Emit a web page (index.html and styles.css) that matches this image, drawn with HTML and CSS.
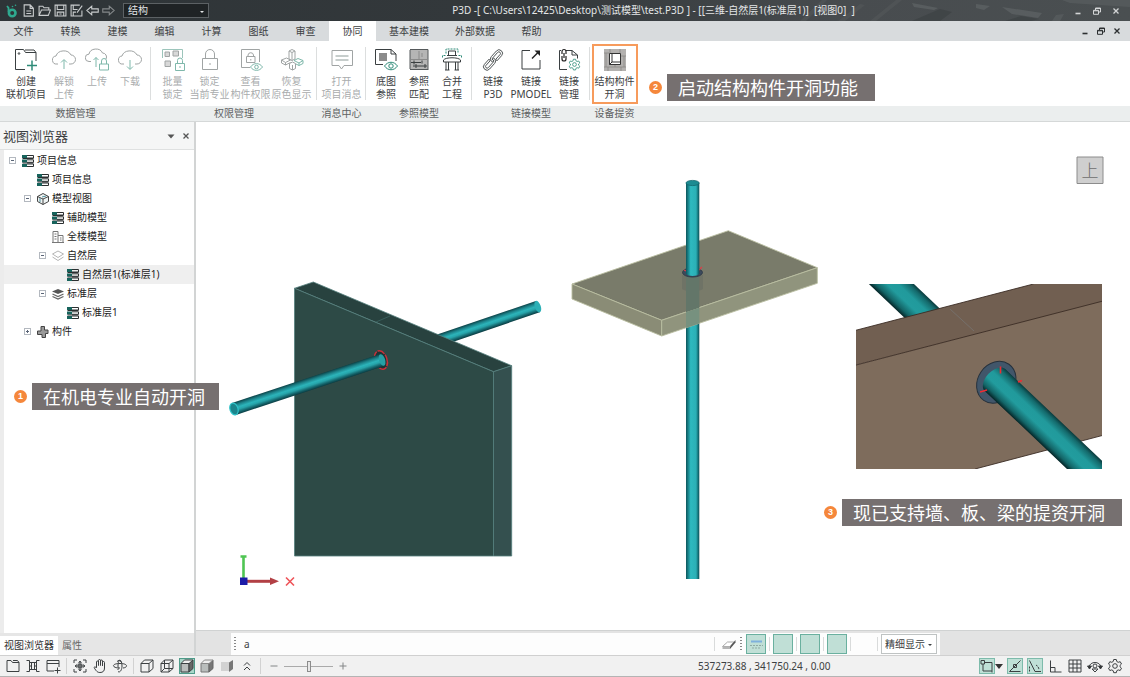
FILE: index.html
```html
<!DOCTYPE html>
<html lang="zh-CN">
<head>
<meta charset="utf-8">
<title>P3D</title>
<link rel="stylesheet" href="styles.css">
</head>
<body>
<svg class="defs" aria-hidden="true">
  <defs>
    <linearGradient id="pipe" x1="0" y1="0" x2="0" y2="1">
      <stop offset="0" stop-color="#0c4348"/><stop offset=".22" stop-color="#1c8289"/><stop offset=".45" stop-color="#2cb4ba"/><stop offset=".62" stop-color="#27a4aa"/><stop offset=".85" stop-color="#136168"/><stop offset="1" stop-color="#0a3c42"/>
    </linearGradient>
    <linearGradient id="pipe-v" x1="0" y1="0" x2="1" y2="0">
      <stop offset="0" stop-color="#0d555b"/><stop offset=".2" stop-color="#1c8d94"/><stop offset=".35" stop-color="#2eb9bf"/><stop offset=".75" stop-color="#2bb0b6"/><stop offset=".9" stop-color="#15757c"/><stop offset="1" stop-color="#0d4f55"/>
    </linearGradient>
    <linearGradient id="pipe-d" x1="0" y1="0" x2="0" y2="1">
      <stop offset="0" stop-color="#0a3b3d"/><stop offset=".12" stop-color="#146a6c"/><stop offset=".35" stop-color="#219a9c"/><stop offset=".6" stop-color="#229c9e"/><stop offset=".85" stop-color="#136567"/><stop offset="1" stop-color="#042426"/>
    </linearGradient>
    <clipPath id="beam-clip"><rect x="856" y="284" width="246" height="185"/></clipPath>
  </defs>
  <symbol id="i-cloud" viewBox="0 0 24 24"><path d="M6 16H5a4 4 0 0 1-1-8 8 7 0 0 1 15-1 4.500 4.500 0 0 1 0 9h-2"/></symbol>
  <symbol id="i-list" viewBox="0 0 12 12"><path d="M0 0h5v3H0zM0 4.500h5v3H0zM0 9h5v3H0z" fill="#17635c" stroke="none"/><path d="M5 .5h6.500v2.500H5M5 4.800h6.500v2.500H5M5 9h6.500v2.500H5M.5 3.500h11M.5 8h11" fill="none" stroke="#2b2f30"/></symbol>
  <symbol id="i-min" viewBox="0 0 10 10"><path d="M2.500 7.500h5" fill="none" stroke="currentColor" stroke-width="1.600"/></symbol>
  <symbol id="i-restore" viewBox="0 0 10 10"><path d="M3.500 4V2h5v4h-2M1.500 4.300h5v4h-5zM3.500 2.500h5M1.500 4.800h5" fill="none" stroke="currentColor"/></symbol>
  <symbol id="i-close" viewBox="0 0 10 10"><path d="M2.500 2.500l5 5M7.500 2.500l-5 5" fill="none" stroke="currentColor" stroke-width="1.300"/></symbol>
  <symbol id="i-cube" viewBox="0 0 16 16"><path d="M2 5.500h8v8.500H2zM2 5.500L5.500 2H14l-4 3.500M14 2v8.500L10 14"/></symbol>
  <symbol id="i-gear" viewBox="0 0 16 16"><path d="M6.700 1.500h2.600l.5 2 1.400.8 2-.6 1.300 2.300-1.500 1.400v1.400l1.500 1.400-1.300 2.300-2-.6-1.400.8-.5 2H6.700l-.5-2-1.400-.8-2 .6-1.300-2.300L3 8.800V7.400L1.500 6l1.300-2.300 2 .6 1.400-.8z"/><circle cx="8" cy="8" r="2.300"/></symbol>
</svg>

<div class="app">
  <header class="titlebar">
    <svg class="streaks" viewBox="0 0 330 21" preserveAspectRatio="xMaxYMid slice" aria-hidden="true">
      <path d="M0 21L22 0h5L6 21zM38 21L60 4l5 1-20 16zM70 21L96 0h6L76 21z" fill="#54585a"/>
      <path d="M112 3l26 5-4 2-20-3zM176 4l14 2-6 4-8-2zM202 7l40 6-4 5-26-4z" fill="#63686a"/>
      <path d="M262 0h68v7l-60-4zM256 15l8-1-4 7h-8z" fill="#5c6163"/>
      <path d="M112 21l28-12 12 3-12 9zM205 21l16-5 18 3-8 2z" fill="#3b4042"/>
    </svg>
    <div class="quick">
      <svg class="logo" viewBox="0 0 12 14" aria-hidden="true"><circle cx="6.200" cy="9" r="3.300" fill="none" stroke="#2fa98f" stroke-width="2.600"/><path d="M2.500 8V3.500M1 2l2 2.500" stroke="#2fa98f" stroke-width="1.800" fill="none"/><circle cx="6.500" cy="2.500" r=".8" fill="#2fa98f"/><circle cx="9.500" cy="1.200" r=".8" fill="#2fa98f"/></svg>
      <button aria-label="新建"><svg viewBox="0 0 12 12"><path d="M2 .8h5.500L10.500 4v7.200H2zM7.500 1v3h3M4 6.500h4.500M4 8.800h4.500"/></svg></button>
      <button aria-label="打开"><svg viewBox="0 0 12 12"><path d="M1 10.500V2h3.500l1 1.500H10v2M1 10.500h8.500l2-5H3.200z"/></svg></button>
      <button aria-label="保存"><svg viewBox="0 0 12 12"><path d="M1 1h10v10H1zM3 1v4h6V1M3 11V7.500h6V11M5 9.300h2"/></svg></button>
      <button aria-label="另存为"><svg viewBox="0 0 12 12"><path d="M11 6v5H1V1h8M3 1v4h4M3 11V7.500h2.500M11.300 1.500L6.500 8"/></svg></button>
      <button aria-label="撤销"><svg viewBox="0 0 12 12"><path d="M.8 6l4.500-4v2.500h6v3h-6V10z"/></svg></button>
      <button class="dim" aria-label="重做"><svg viewBox="0 0 12 12"><path d="M11.200 6l-4.500-4v2.500h-6v3h6V10z"/></svg></button>
    </div>
    <div class="pick pick-dark"><select aria-label="专业"><option>结构</option></select></div>
    <h1 class="title">P3D -[ C:\Users\12425\Desktop\测试模型\test.P3D ] - [[三维-自然层1(标准层1)]&nbsp; [视图0]&nbsp; ]</h1>
    <div class="wins">
      <button aria-label="最小化"><svg><use href="#i-min"/></svg></button>
      <button aria-label="还原"><svg><use href="#i-restore"/></svg></button>
      <button aria-label="关闭"><svg><use href="#i-close"/></svg></button>
    </div>
  </header>

  <nav class="menubar">
    <button>文件</button><button>转换</button><button>建模</button><button>编辑</button><button>计算</button><button>图纸</button><button>审查</button><button class="on">协同</button><button class="wide">基本建模</button><button class="wide">外部数据</button><button>帮助</button>
    <div class="wins wins-doc">
      <button aria-label="最小化视图"><svg><use href="#i-min"/></svg></button>
      <button aria-label="还原视图"><svg><use href="#i-restore"/></svg></button>
      <button aria-label="关闭视图"><svg><use href="#i-close"/></svg></button>
    </div>
  </nav>

  <section class="ribbon">
    <div class="group g-data">
      <div class="tools">
        <button class="w43"><svg viewBox="0 0 24 24"><path d="M11 21.500H1.500V1.500h8l2 3h10.500V13M11 2h9l2 2.500" stroke="#3a3f41"/><circle cx="5" cy="5.500" r=".8" stroke="#3a3f41"/><path d="M18 12.500v10M13 17.500h10" stroke="#2e8b78" stroke-width="1.500"/></svg><span>创建<br>联机项目</span></button>
        <button class="w33" disabled><svg viewBox="0 0 24 24"><use href="#i-cloud"/><path d="M12 21v-9M9 14.500l3-3 3 3" stroke="#7fb8ab"/></svg><span>解锁<br>上传</span></button>
        <button class="w33" disabled><svg viewBox="0 0 24 24"><path d="M6 13.500H4a3.700 3.700 0 0 1 0-7.400A7 6 0 0 1 17.500 5a4 4 0 0 1 3.500 6"/><path d="M11 19V9.500M8.500 12l2.500-2.500 2.500 2.500M14.500 16h9v6h-9zM16.500 16v-3a2.500 2.500 0 0 1 5 0v3" stroke="#7fb8ab"/></svg><span>上传</span></button>
        <button class="w33" disabled><svg viewBox="0 0 24 24"><use href="#i-cloud"/><path d="M12 12v9M9 18.500l3 3 3-3" stroke="#7fb8ab"/></svg><span>下载</span></button>
      </div>
      <div class="gname">数据管理</div>
    </div>
    <div class="group g-auth">
      <div class="tools">
        <button class="w33" disabled><svg viewBox="0 0 24 24"><path d="M1.500 10V1.500h20V10" stroke="#9cc5bb"/><path d="M4 4h4.500v4.500H4zM12 3h5.500v5H12zM4 13h5.500v5.500H4z" fill="#d8d8d8"/><path d="M14.500 15.500h9v7h-9zM16.500 15.500v-3a2.500 2.500 0 0 1 5 0v3M19 18v2" stroke="#7fb8ab"/></svg><span>批量<br>锁定</span></button>
        <button class="w41" disabled><svg viewBox="0 0 24 24"><path d="M4.500 10.500h15v11h-15zM7.500 10.500V6a4.500 4.500 0 0 1 9 0v4.500M12 15v2"/></svg><span>锁定<br>当前专业</span></button>
        <button class="w41" disabled><svg viewBox="0 0 24 24"><path d="M11 19.500H2.500v-18h18V14M7.500 8.500H16v6H7.500zM9 8.500V7a2.800 2.800 0 0 1 5.500 0v1.500M11.800 11v1.500"/><path d="M11.500 19c3-4.500 9-4.500 12 0-3 4.500-9 4.500-12 0z" stroke="#7fb8ab"/><circle cx="17.500" cy="19" r="1.800" stroke="#7fb8ab"/></svg><span>查看<br>构件权限</span></button>
        <button class="w41" disabled><svg viewBox="0 0 24 24"><path d="M9 3l3-1.500L15 3v8l-3 1.500L9 11zM9 3l3 1.500L15 3M12 4.500v8M1.500 12l5-2 4 2-5 2.500zM1.500 12v3l4 2 5-2.500M5.500 14.500V17M9.500 15.500l3-1.500 3 1.500v5l-3 1.500-3-1.500zM12.500 17v5"/><path d="M14 12.500l4-2 5 2-4 2.500zM23 12.500v3l-4 2-3-1.500M19 15v2.500" stroke="#7fb8ab"/></svg><span>恢复<br>原色显示</span></button>
      </div>
      <div class="gname">权限管理</div>
    </div>
    <div class="group g-msg">
      <div class="tools">
        <button class="w43" disabled><svg viewBox="0 0 24 24"><path d="M2 2.500h20.500v15H14l-2.500 3.500L9 17.500H2z"/><path d="M5.500 8h13M5.500 12h13" stroke="#8d9b98"/></svg><span>打开<br>项目消息</span></button>
      </div>
      <div class="gname">消息中心</div>
    </div>
    <div class="group g-ref">
      <div class="tools">
        <button class="w33"><svg viewBox="0 0 24 24"><path d="M9 16.500H1.500v-15H17L22 6v7M17 1.500V6h5" stroke="#3a3f41"/><path d="M5 5h8v8H5z" fill="#8b8b8b" stroke="none"/><path d="M10.500 18c3.500-5 9.500-5 13 0-3.500 5-9.500 5-13 0z" stroke="#2e8b78"/><circle cx="17" cy="18" r="2.200" stroke="#2e8b78"/></svg><span>底图<br>参照</span></button>
        <button class="w33"><svg viewBox="0 0 24 24"><path d="M3 2h18v19H3z" fill="#b5b5b5" stroke="none"/><path d="M3 21.500h18.500M3 1.500h18V21M3 2v19" stroke="#55595b"/><path d="M4 11.500h16M12 3v8M15 5v4" stroke="#8b8b8b"/><path d="M4 14.500h10M6 18h14M7 12.500v4M15 12.500v3M18 16v4M9 16v4" stroke="#3a3f41"/></svg><span>参照<br>匹配</span></button>
        <button class="w33"><svg viewBox="0 0 24 24"><path d="M8.500 3h7v4.500h-7zM7 7.500h10M3.500 12c2-3 15-3 17 0v2h-17zM6 14v8M8.500 14v8M15.500 14v8M18 14v8M5 22h4.500M14.500 22H19" stroke="#3a3f41"/><path d="M6 5.500V1h12v4.500M2.500 9.500v-2h4M21.500 9.500v-2h-4" stroke="#2e8b78" stroke-dasharray="2 1"/></svg><span>合并<br>工程</span></button>
      </div>
      <div class="gname">参照模型</div>
    </div>
    <div class="group g-link">
      <div class="tools">
        <button class="w38"><svg viewBox="0 0 24 24"><g stroke="#4a4f51" stroke-width=".9" transform="rotate(-48 12 12)"><path d="M10 8.500H3a3.500 3.500 0 0 0 0 7h7.500a3.500 3.500 0 0 0 3.400-4.500h-2a1.700 1.700 0 0 1-1.500 2.600H3.200a1.600 1.600 0 0 1 0-3.200H9.500zM14 15.500h7a3.500 3.500 0 0 0 0-7h-7.500a3.500 3.500 0 0 0-3.400 4.500h2a1.700 1.700 0 0 1 1.500-2.600h7.200a1.600 1.600 0 0 1 0 3.200h-6.300z"/></g></svg><span>链接<br>P3D</span></button>
        <button class="w38"><svg viewBox="0 0 24 24"><path d="M11 2.500H3v18.500h18V12" stroke="#3a3f41"/><path d="M13 10.500L19 4.500" stroke="#222" stroke-width="1.500"/><path d="M15.500 2.500H21v5.500z" fill="#222" stroke="none"/></svg><span>链接<br>PMODEL</span></button>
        <button class="w38"><svg viewBox="0 0 24 24"><path d="M10 21.500H2.500v-19H4M9 2.500h6L20.500 7v3.500M15 2.500V7h5.500" stroke="#3a3f41"/><path d="M5 6V3.500a2 2 0 0 1 4 0V6M5 8v3a2 2 0 0 0 4 0V8M7 5v5" stroke="#222" stroke-width="1.200"/><svg x="11" y="10" width="13" height="13" viewBox="0 0 16 16" stroke="#2e8b78"><use href="#i-gear"/></svg></svg><span>链接<br>管理</span></button>
      </div>
      <div class="gname">链接模型</div>
    </div>
    <div class="group g-dev">
      <div class="tools">
        <button class="hot"><svg viewBox="0 0 24 24"><path d="M1 1h22v22H1z" fill="#b3b1af" stroke="none"/><path d="M6.500 5.500h11v11h-11z" fill="#fff" stroke="#333"/><path d="M9 5.500v8.500h8.500M6.500 16.500L9 14" stroke="#333"/><path d="M1 5h5M18 8h5M1 19h22M7 1v4M17 1v4M5 19v4M12 17v2M18 19v4M3 5v14M21 8v11" stroke="#8a8886" stroke-width=".8"/></svg><span>结构构件<br>开洞</span></button>
      </div>
      <div class="gname">设备提资</div>
    </div>
  </section>

  <main class="work">
    <aside class="browser">
      <div class="bhead"><h2>视图浏览器</h2>
        <button aria-label="菜单"><svg viewBox="0 0 10 10"><path d="M1.500 3.500h7L5 7.500z" fill="#555"/></svg></button>
        <button aria-label="关闭面板"><svg><use href="#i-close"/></svg></button>
      </div>
      <ul class="tree">
        <li class="l0"><i class="box"></i><svg><use href="#i-list"/></svg>项目信息</li>
        <li class="l1"><i></i><svg><use href="#i-list"/></svg>项目信息</li>
        <li class="l1"><i class="box"></i><svg viewBox="0 0 12 12"><path d="M6 .5l5.500 3v5L6 11.500.5 8.500v-5zM.5 3.500L6 6l5.500-2.500M6 6v5.500" fill="#eef3f3" stroke="#444"/><path d="M3 5v4M9 3l-4 1" stroke="#4d8f9b" fill="none"/></svg>模型视图</li>
        <li class="l2"><i></i><svg><use href="#i-list"/></svg>辅助模型</li>
        <li class="l2"><i></i><svg viewBox="0 0 12 12"><path d="M1 11.500V.5h5v11M6 4.500h5v7M0 11.500h12M2.500 3h2M2.500 5.500h2M2.500 8h2M8 7h1.500M8 9h1.500" fill="none" stroke="#777"/></svg>全楼模型</li>
        <li class="l2"><i class="box"></i><svg viewBox="0 0 12 12"><path d="M.5 4L6 1l5.500 3L6 7.500zM.5 7L6 10.500 11.500 7" fill="#fff" stroke="#b5b5b5"/></svg>自然层</li>
        <li class="l3 sel"><i></i><svg><use href="#i-list"/></svg>自然层1(标准层1)</li>
        <li class="l2"><i class="box"></i><svg viewBox="0 0 12 12"><path d="M0 3.500L6 1l6 2.500L6 6z" fill="#555"/><path d="M.5 6L6 8.500 11.500 6M.5 8.500L6 11l5.500-2.500" fill="none" stroke="#666" stroke-width="1.300"/></svg>标准层</li>
        <li class="l3"><i></i><svg><use href="#i-list"/></svg>标准层1</li>
        <li class="l1"><i class="box plus"></i><svg viewBox="0 0 12 12"><path d="M4 .5h3.500V4H11v3.500H8.500v4H5v-3H.5V5H4z" fill="#999" stroke="#444"/></svg>构件</li>
      </ul>
      <div class="ptabs"><button class="on">视图浏览器</button><button>属性</button></div>
    </aside>

    <div class="view">
      <div class="canvas">
        <svg class="scene" viewBox="196 122 934 508" role="img" aria-label="三维视图">
          <g transform="translate(428 344) rotate(-18.800)"><rect x="0" y="-6" width="116" height="12" fill="url(#pipe)"/><ellipse cx="116" cy="0" rx="3" ry="6" fill="#2cb0b6"/></g>
          <g stroke="#55807d" stroke-width=".8" stroke-linejoin="round">
            <path d="M294.500 288.300L313.300 282l198.400 83.700-18.200 6z" fill="#28423f"/>
            <path d="M493.500 371.700l18.200-6V556h-18.200z" fill="#34504f"/>
            <path d="M294.500 288.300l199 83.400V556h-199z" fill="#2d4a46"/>
            <path d="M376 322l14-6" stroke="#3c6663"/>
          </g>
          <g transform="translate(381 360) rotate(-18.300)"><ellipse rx="6" ry="9.500" fill="#1d3434" stroke="#c9303a" stroke-width="1.500" stroke-dasharray="8 1"/></g>
          <g transform="translate(234 409) rotate(-18.300)"><rect x="0" y="-6.300" width="156" height="12.600" fill="url(#pipe)"/><ellipse cx="156" rx="3" ry="6" fill="#27a0a6"/><ellipse rx="4" ry="6" fill="#1b858c" stroke="#2dc3c9" stroke-width="1.200"/></g>

          <rect x="686" y="322" width="13.300" height="257" fill="url(#pipe-v)"/>
          <g stroke="#b9bda0" stroke-width=".9" stroke-linejoin="round">
            <path d="M572 284l156.300-53.300 89 37-155.600 52.600z" fill="#797b6a"/>
            <path d="M572 284l89.700 36.300V336L572 299z" fill="#8a8c76"/>
            <path d="M661.700 320.300l155.600-52.600v15.600L661.700 336z" fill="#90947d"/>
          </g>
          <path d="M682 275h21v14c-4 3-17 3-21 0z" fill="#6f7366"/>
          <path d="M686 276h13.300v31.800l-13.300 4.500z" fill="#637669"/><path d="M686 312.300l13.300-4.500v15.600L686 328z" fill="#77917f"/>
          <ellipse cx="692.500" cy="272.500" rx="10" ry="4.500" fill="#3b4a5c" stroke="#303d4a"/>
          <path d="M684 270l2 1M702 267l-3 3" stroke="#d8404a" stroke-width="1.300"/>
          <path d="M686 183v91c3 2.500 10.300 2.500 13.300 0v-91z" fill="url(#pipe-v)"/>
          <ellipse cx="692.600" cy="183" rx="6.600" ry="2.600" fill="#1c8b92" stroke="#12686e" stroke-width=".8"/>

          <g clip-path="url(#beam-clip)">
            <rect x="856" y="284" width="246" height="185" fill="#fff"/>
            <g transform="translate(922.500 313.500) rotate(43.500)"><rect x="-70" y="-15.500" width="90" height="31" fill="url(#pipe-d)"/></g>
            <path d="M855 330.500L1033.500 284H1103v18L855 365.300z" fill="#715f51"/>
            <path d="M855 365.300L1103 301v134.300L975 469H855z" fill="#7e6c5c"/>
            <path d="M855 365.300L1103 301M855 330.500L1033.500 284M975 469l128-33.700" stroke="#3b2c25" stroke-width=".9" fill="none"/>
            <path d="M950 309l24 22" stroke="#76706b"/>
            <ellipse cx="996.300" cy="382.300" rx="18.500" ry="22" transform="rotate(35 996.300 382.300)" fill="#41566a" stroke="#26313c"/>
            <g transform="translate(995 380) rotate(43.500)"><path d="M0-15h160v30H0c-5 0-9-7-9-15s4-15 9-15z" fill="url(#pipe-d)"/></g>
            <path d="M1000.500 366.500v7M980 392l7-2M1018 382l4-1.500" stroke="#ef2b33" stroke-width="1.600"/>
          </g>

          <g class="cube"><path d="M1077 157h26v26.500h-26z" fill="#cfcfcf" stroke="#8c8c8c"/><text x="1090" y="177">上</text></g>
          <path d="M240.500 556.500h6M243.500 556.500V579" stroke="#4fc553" stroke-width="2.600" fill="none"/>
          <path d="M246 581.300h26" stroke="#b24045" stroke-width="3"/><path d="M270 577.500l9 3.800-9 3.800z" fill="#b24045"/>
          <path d="M240 577.500h7.500v7.500H240z" fill="#1c1ca8"/>
          <path d="M286 577.500l8 8M294 577.500l-8 8" stroke="#ee5358" stroke-width="1.600"/>
        </svg>
      </div>
      <div class="cmdrow">
        <div class="cmd">
          <i class="grip"></i>
          <input class="cmdin" type="text" value="a" aria-label="命令">
          <i class="sep"></i>
          <button class="plain" aria-label="擦除"><svg viewBox="0 0 16 16"><path d="M1.500 10.500l5-4.500H13L9 10.500z" fill="#fff" stroke="#aaa"/><path d="M9 13l5.500-6.500V4L9 10.500z" fill="#555"/><path d="M1.500 10.500h7.500V13H1.500z" fill="#b5b5b5"/></svg></button>
          <i class="grip"></i>
          <button class="sq" aria-label="图层一"><svg viewBox="0 0 17 17"><path d="M3 5.500h11" stroke="#7fb0dc" stroke-width="2"/><path d="M2 9.500h13M4 12h9" stroke="#8fa9a3" stroke-dasharray="2 1"/></svg></button>
          <i class="sep"></i><button class="sq" aria-label="图层二"></button>
          <i class="sep"></i><button class="sq" aria-label="图层三"></button>
          <i class="sep"></i><button class="sq" aria-label="图层四"></button>
          <i class="sep"></i><i class="sep far"></i>
          <div class="pick pick-light"><select aria-label="显示方式"><option>精细显示</option></select></div>
        </div>
      </div>
    </div>
  </main>

  <footer class="status">
    <div class="sgroup">
      <button aria-label="打开"><svg viewBox="0 0 16 16"><path d="M2 13.500v-11h4l1.500 2H14v9zM8 2.500h4.500l1.500 2"/></svg></button>
      <button aria-label="对齐"><svg viewBox="0 0 16 16"><path d="M1.500 2.500h3v11h-3M14.500 2.500h-3v11h3M4.500 4.500h7M4.500 11.500h7M4.500 8h2M9.500 8h2M6.500 5v6M9.500 5v6"/></svg></button>
      <button aria-label="新窗口"><svg viewBox="0 0 16 16"><path d="M9 13H2V2.500h12V9M2 5.500h12M12.500 9.500v6M9.500 12.500h6"/></svg></button>
    </div>
    <div class="sgroup">
      <button aria-label="全图"><svg viewBox="0 0 16 16"><path d="M2 5V2h3M11 2h3v3M14 11v3h-3M5 14H2v-3M8 3.500v9M3.500 8h9"/><path d="M6.500 5.200L8 3l1.500 2.200M6.500 10.800L8 13l1.500-2.200M5.200 6.500L3 8l2.200 1.500M10.800 6.500L13 8l-2.200 1.500M6.200 6.200h3.600v3.600H6.200z"/></svg></button>
      <button aria-label="平移"><svg viewBox="0 0 16 16"><path d="M4.500 9.500V4a1 1 0 0 1 2 0v3.500V2.500a1 1 0 0 1 2 0v5V3a1 1 0 0 1 2 0v5-3.500a1 1 0 0 1 2 0v5.500c0 3-1.500 4.500-4.500 4.500-2.500 0-3.500-1-6-5 .8-1 1.700-.5 2.500.500z"/></svg></button>
      <button aria-label="旋转"><svg viewBox="0 0 16 16"><path d="M7 10c-3 0-5.500-1-5.500-2.300S4 5.500 8 5.500s6.500 1 6.500 2.300-1.500 2-3.500 2.200M6 13.500c1.500 1.500 4-1 4-5.500S8.500 1.500 7.500 2.500 6 5 6 8M5 3.500l2.500-1.500 2 2.500M5.500 8l2 2-2 2"/></svg></button>
    </div>
    <div class="sgroup">
      <button aria-label="立方体"><svg><use href="#i-cube"/></svg></button>
      <button aria-label="线框"><svg viewBox="0 0 16 16"><use href="#i-cube"/><path d="M5.500 2v8.500H14M5.500 10.500L2 14"/></svg></button>
      <button class="on" aria-label="着色带边"><svg viewBox="0 0 16 16"><path d="M2 5.500h8v8.500H2z" fill="#b9bdbc"/><path d="M10 5.500L14 2v8.500L10 14z" fill="#666"/><path d="M2 5.500L5.500 2H14l-4 3.500z" fill="#eee"/></svg></button>
      <button aria-label="着色"><svg viewBox="0 0 16 16"><path d="M2 5.500h8v8.500H2z" fill="#b9bdbc" stroke="#777"/><path d="M10 5.500L14 2v8.500L10 14z" fill="#777" stroke="#666"/><path d="M2 5.500L5.500 2H14l-4 3.500z" fill="#eee" stroke="#888"/></svg></button>
      <button aria-label="真实"><svg viewBox="0 0 16 16"><path d="M2 4h8v9H2z" fill="#d2d2d2" stroke="none"/><path d="M10 4.500L14 2v9l-4 3z" fill="#777" stroke="none"/></svg></button>
      <button aria-label="更多"><svg viewBox="0 0 16 16"><path d="M5 7.500L8 4.500l3 3M5 12l3-3 3 3"/></svg></button>
    </div>
    <div class="sgroup zoomer">
      <button class="faint" aria-label="缩小"><svg viewBox="0 0 16 16"><path d="M4.500 8h7"/></svg></button>
      <input type="range" aria-label="缩放">
      <button class="faint" aria-label="放大"><svg viewBox="0 0 16 16"><path d="M4.500 8h7M8 4.500v7"/></svg></button>
    </div>
    <output class="coords">537273.88 , 341750.24 , 0.00</output>
    <div class="snaps">
      <button class="on" aria-label="捕捉"><svg viewBox="0 0 16 16"><path d="M2 2.500h3.500V6H2zM5.500 4.500H13V13H4V6M13 13v1.500"/></svg></button>
      <button class="caret" aria-label="捕捉选项"><svg viewBox="0 0 8 8"><path d="M0 2h8L4 7z" fill="#333" stroke="none"/></svg></button>
      <button class="on" aria-label="端点"><svg viewBox="0 0 16 16"><path d="M2.500 13.500l11-11M2.500 13.500h11"/><path d="M6.500 6.500h3v3h-3z"/></svg></button>
      <button class="on" aria-label="极轴"><svg viewBox="0 0 16 16"><path d="M2.500 2.500L8 13.500h6"/><path d="M2.500 13.500V8M9 7c2 1 3 3 3 5" stroke-dasharray="2 1"/></svg></button>
      <button aria-label="正交"><svg viewBox="0 0 16 16"><path d="M3.500 2.500v11.500h11M3.500 9.500H8v4.500"/></svg></button>
      <button aria-label="网格"><svg viewBox="0 0 16 16"><path d="M2 2h12v12H2zM6 2v12M10 2v12M2 6h12M2 10h12"/></svg></button>
      <button aria-label="视点"><svg viewBox="0 0 16 16"><circle cx="8" cy="8" r="2"/><path d="M2 9c1-6 11-6 12 0M5 11l3 3 3-3z"/><path d="M.5 8h4L2.500 11zM11.500 8h4l-2 3z" fill="#333"/></svg></button>
      <button aria-label="设置"><svg><use href="#i-gear"/></svg></button>
    </div>
  </footer>

  <div class="note n1"><b>1</b><p>在机电专业自动开洞</p></div>
  <div class="note n2"><b>2</b><p>启动结构构件开洞功能</p></div>
  <div class="note n3"><b>3</b><p>现已支持墙、板、梁的提资开洞</p></div>
</div>
</body>
</html>
```
FILE: styles.css
```css
* { box-sizing: border-box; }
html, body { height: 100%; margin: 0; }
body {
  font: 10px/13px "Noto Sans", "Noto Sans CJK SC", sans-serif;
  color: #3c4042;
  background: #fff;
}
button, select, input { font: inherit; color: inherit; }
button { display: flex; align-items: center; justify-content: center; padding: 0; border: 0; background: none; white-space: nowrap; }
svg { display: block; flex: none; }
h1, h2, p, ul { margin: 0; padding: 0; font: inherit; list-style: none; }
.defs { position: absolute; width: 0; height: 0; }

.app { position: relative; display: flex; flex-direction: column; height: 100vh; overflow: hidden; border-bottom: 1px solid #b4b4b4; }

/* title bar */
.titlebar { position: relative; display: flex; flex: none; align-items: center; height: 21px; padding-right: 5px; color: #e4e6e7; background: linear-gradient(90deg, #2e3437 0, #34393c 50%, #484c4f 75%, #4a4f51 100%); }
.streaks { position: absolute; top: 0; right: 0; width: 330px; height: 21px; opacity: .6; }
.titlebar > :not(.streaks) { position: relative; }
.quick { display: flex; align-items: center; width: 123px; padding-left: 6px; }
.quick button { width: 16px; height: 16px; }
.quick button svg { width: 13px; height: 13px; fill: none; stroke: #c9cccd; }
.quick .dim { opacity: .55; }
.logo { width: 12px; height: 14px; margin-right: 2px; }
.title { flex: 1; padding-left: 30px; text-align: center; white-space: nowrap; }
.wins { display: flex; color: #d3d5d6; }
.wins button { width: 19px; height: 16px; }
.wins svg { width: 10px; height: 10px; }

.pick { position: relative; }
.pick select { width: 100%; height: 100%; padding: 0 4px; border: 0; outline: 0; background: none; appearance: none; }
.pick::after { content: ""; position: absolute; right: 4px; top: 50%; border: 2px solid transparent; border-top-color: currentColor; border-bottom: 0; }
.pick-dark { width: 86px; height: 15px; line-height: 13px; border: 1px solid #5c6164; background: #1f2325; }
.pick-light { width: 56px; height: 20px; border: 1px solid #bfc3c3; background: #fff; }
.pick-light select { padding: 0 3px; }

/* menu tabs */
.menubar { display: flex; flex: none; height: 20px; background: #d8dbdd; }
.menubar > button { width: 47px; }
.menubar > .wide { width: 66px; }
.menubar .on { background: #fff; }
.wins-doc { align-items: center; margin-left: auto; padding-right: 5px; color: #2c2f31; }
.wins-doc button { width: 16px; }

/* ribbon */
.ribbon { display: flex; flex: none; height: 81px; background: linear-gradient(#fff 65px, #ebeeee 65px); border-bottom: 1px solid #d5d8d8; }
.group { position: relative; display: flex; flex-direction: column; }
.group:not(.g-dev)::after { content: ""; position: absolute; right: 0; top: 6px; width: 1px; height: 53px; background: #dcdede; }
.tools { display: flex; justify-content: center; height: 65px; padding-top: 3px; }
.tools button { flex-direction: column; justify-content: flex-start; gap: 3px; padding-top: 4px; text-align: center; }
.tools button > svg { width: 24px; height: 24px; fill: none; stroke: #8f9494; }
.tools button:disabled { color: #a9acad; }
.tools button:disabled > svg { stroke: #a0a4a4; }
.tools .w33 { width: 33px; }
.tools .w38 { width: 38px; }
.tools .w41 { width: 41px; }
.tools .w43 { width: 43px; }
.tools .hot { width: 46px; height: 60px; padding-top: 2px; border: 2px solid #f79b5c; }
.gname { height: 15px; line-height: 15px; text-align: center; color: #5d6162; }
.g-data { width: 151px; }
.g-auth { width: 166px; }
.g-msg { width: 49px; }
.g-ref { width: 106px; }
.g-link { width: 118px; }
.g-dev { width: 49px; }

/* work area */
.work { display: flex; flex: 1; min-height: 0; }
.browser { display: flex; flex: none; flex-direction: column; width: 196px; border-right: 2px solid #d2d4d4; background: #ececec; }
.bhead { display: flex; align-items: center; height: 28px; padding: 0 1px 0 3px; border-bottom: 1px solid #dfe1e1; background: #f5f6f6; }
.bhead h2 { flex: 1; font-size: 13px; line-height: 18px; }
.bhead button { width: 15px; height: 15px; color: #555; }
.bhead svg { width: 10px; height: 10px; }
.tree { flex: 1; margin-left: 4px; padding-top: 1px; background: #fff; }
.tree li { display: flex; align-items: center; height: 19px; color: #222; white-space: nowrap; }
.tree svg { width: 12px; height: 12px; margin: 0 3px 0 6px; }
.tree i { width: 7px; height: 7px; }
.tree .box { border: 1px solid #b3b8bf; background: linear-gradient(#5a6577, #5a6577) center / 3px 1px no-repeat; }
.tree .plus { background: linear-gradient(#5a6577, #5a6577) center / 3px 1px no-repeat, linear-gradient(#5a6577, #5a6577) center / 1px 3px no-repeat; }
.tree .l0 { padding-left: 5px; }
.tree .l1 { padding-left: 20px; }
.tree .l2 { padding-left: 35px; }
.tree .l3 { padding-left: 50px; }
.tree .sel { background: #efefef; }
.ptabs { display: flex; height: 22px; padding-top: 3px; background: #e6e6e6; }
.ptabs button { padding: 0 4px; color: #666; }
.ptabs .on { color: #333; background: #fff; }

.view { display: flex; flex: 1; flex-direction: column; min-width: 0; }
.canvas { flex: 1; min-height: 0; background: #fff; }
.scene { width: 100%; height: 100%; }
.scene text { font: 17px "Noto Sans CJK SC", sans-serif; font-weight: 300; fill: #6e6e6e; text-anchor: middle; }
.cmdrow { flex: none; height: 25px; padding: 2px 190px 0 35px; border-top: 1px solid #d0d2d2; background: #e3e3e3; }
.cmd { display: flex; align-items: center; height: 22px; padding: 0 3px; background: #fdfdfd; }
.cmdin { flex: 1; min-width: 0; padding: 0 8px; border: 0; outline: 0; background: none; }
.grip { width: 2px; height: 14px; background: repeating-linear-gradient(#888 0 1px, transparent 1px 3px); }
.sep { width: 1px; height: 14px; margin: 0 3px; background: #d9dbdb; }
.sep.far { margin-left: 23px; }
.plain { width: 22px; height: 18px; }
.plain svg { width: 16px; height: 16px; }
.cmd .grip + .sq { margin-left: 4px; }
.sq { width: 20px; height: 20px; border: 1px solid #6ab09f; background: #c0dfd6; }
.sq svg { width: 17px; height: 17px; fill: none; }

/* status bar */
.status { display: flex; flex: none; align-items: center; height: 21px; padding: 0 5px 0 3px; border-top: 1px solid #d0d0d0; background: #f1f1f1; }
.status button { width: 20px; height: 16px; }
.status svg { width: 16px; height: 16px; fill: none; stroke: #3c4042; }
.sgroup { display: flex; align-items: center; padding-right: 3px; }
.sgroup + .sgroup { padding-left: 3px; border-left: 1px solid #d2d2d2; }
.status .sgroup .on { width: 16px; margin: 0 2px; background: #a9d6c9; box-shadow: inset 0 0 0 1px #4f9c8a; }
.zoomer input { width: 49px; height: 14px; margin: 0; background: linear-gradient(#aaa, #aaa) center / 100% 1px no-repeat; appearance: none; }
.zoomer input::-webkit-slider-thumb { appearance: none; width: 4px; height: 11px; border: 1px solid #8c8c8c; background: #e8e8e8; }
.status .faint { opacity: .6; }
.coords { flex: 1; padding-left: 342px; white-space: nowrap; }
.snaps { display: flex; align-items: center; }
.status .snaps .on { width: 16px; margin: 0 2px; background: #bfe0d6; box-shadow: inset 0 0 0 1px #7dbbab; }
.status .caret { width: 8px; margin-right: 2px; margin-left: -2px; }
.status .caret svg { width: 8px; height: 8px; }

/* numbered notes laid over the window */
.note { position: absolute; display: flex; align-items: center; gap: 5px; }
.note b { display: flex; align-items: center; justify-content: center; width: 13px; height: 13px; border-radius: 50%; font: bold 9px/13px "Liberation Sans", sans-serif; color: #fff; background: #f5873b; }
.note p { padding: 0 17px 0 11px; font: 18px/27px "Noto Sans CJK SC", sans-serif; color: #fff; background: #767070; white-space: nowrap; }
.n1 { left: 14px; top: 383px; }
.n2 { left: 649px; top: 74px; }
.n3 { left: 824px; top: 499px; }
.n1 p { padding-right: 14px; }
```
